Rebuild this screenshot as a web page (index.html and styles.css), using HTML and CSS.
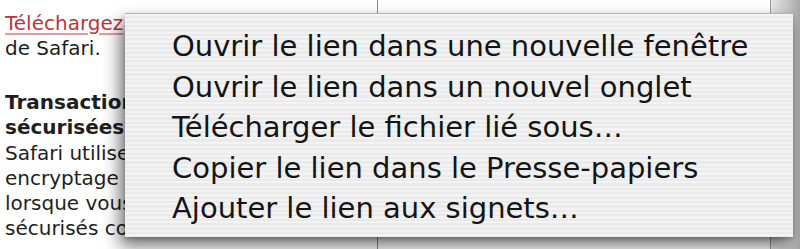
FILE: index.html
```html
<!DOCTYPE html>
<html lang="fr">
<head>
<meta charset="utf-8">
<title>Menu contextuel Safari</title>
<link rel="stylesheet" href="styles.css">
</head>
<body>
<div class="page">
  <div class="column">
    <div class="text">
      <p class="intro"><a class="link" href="#">Téléchargez</a> la nouvelle version<br>de Safari.</p>
      <p class="para"><strong>Transactions<br>sécurisées</strong><br>Safari utilise le dernier<br>encryptage 128 bits<br>lorsque vous visitez des sites<br>sécurisés comme celui de votre</p>
    </div>
  </div>
  <div class="main"></div>
  <div class="edge"></div>
</div>
<ul class="menu">
  <li class="item">Ouvrir le lien dans une nouvelle fenêtre</li>
  <li class="item">Ouvrir le lien dans un nouvel onglet</li>
  <li class="item">Télécharger le fichier lié sous…</li>
  <li class="item">Copier le lien dans le Presse-papiers</li>
  <li class="item">Ajouter le lien aux signets…</li>
</ul>
</body>
</html>
```

FILE: styles.css
```css
html, body {
  margin: 0;
  padding: 0;
  background: #ffffff;
  width: 800px;
  height: 249px;
  overflow: hidden;
}

body {
  position: relative;
  font-family: "DejaVu Sans", "Noto Sans", sans-serif;
}

.page {
  display: flex;
  height: 249px;
}

.column {
  width: 372px;
  padding: 11px 0 0 5px;
  border-right: 1px solid #8a8a8a;
  color: #1e1e1e;
  font-size: 20px;
  line-height: 25px;
  white-space: nowrap;
}

.text {
  width: 120px;
  overflow: hidden;
}

.column p {
  margin: 0;
}

.intro {
  margin-bottom: 29px !important;
}

.para {
  line-height: 25.3px;
}

.link {
  color: #b8353a;
  text-decoration: underline;
  text-decoration-color: #e89a9c;
  text-underline-offset: 3px;
}

.para strong {
  font-weight: bold;
}

.main {
  flex: 1;
  background: #ffffff;
}

.edge {
  width: 29px;
  border-left: 1px solid #9a9a9a;
  background: linear-gradient(to right, #e6e6e6, #c4c4c4 60%, #a8a8a8);
}

.menu {
  position: absolute;
  left: 125px;
  top: 13px;
  width: 668px;
  height: 224px;
  box-sizing: border-box;
  margin: 0;
  padding: 12px 0 10px 0;
  list-style: none;
  border-top: 1px solid #b4b4b4;
  background: repeating-linear-gradient(
    to bottom,
    #f3f3f3 0px,
    #f3f3f3 2.2px,
    #eaeaea 2.2px,
    #eaeaea 4.4px
  );
  box-shadow: -5px 9px 16px rgba(0, 0, 0, 0.55), 0 2px 4px rgba(0, 0, 0, 0.2);
}

.item {
  padding-left: 47px;
  font-size: 29px;
  line-height: 40.5px;
  color: #141414;
  white-space: nowrap;
}
```
